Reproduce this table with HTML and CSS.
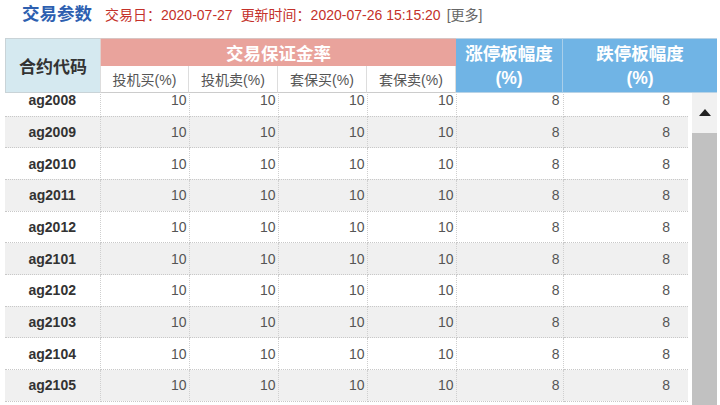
FILE: index.html
```html
<!DOCTYPE html>
<html lang="zh">
<head>
<meta charset="utf-8">
<title>交易参数</title>
<link rel="stylesheet" href="styles.css">
</head>
<body>
<div class="title-bar">
  <span class="title">交易参数</span>
  <span class="info">交易日：2020-07-27</span>
  <span class="info">更新时间：2020-07-26 15:15:20</span>
  <span class="more">[更多]</span>
</div>
<div class="table-wrap">
  <div class="head">
    <div class="h-code">合约代码</div>
    <div class="h-margin">交易保证金率</div>
    <div class="h-sub">投机买(%)</div>
    <div class="h-sub">投机卖(%)</div>
    <div class="h-sub">套保买(%)</div>
    <div class="h-sub">套保卖(%)</div>
    <div class="h-limit h-up">涨停板幅度<br>(%)</div>
    <div class="h-limit h-down">跌停板幅度<br>(%)</div>
  </div>
  <div class="body">
    <div class="viewport">
      <table class="rows">
        <colgroup>
          <col class="c-code"><col class="c-num"><col class="c-num"><col class="c-num"><col class="c-num"><col class="c-up"><col class="c-down">
        </colgroup>
        <tbody>
          <tr><td>ag2008</td><td>10</td><td>10</td><td>10</td><td>10</td><td>8</td><td>8</td></tr>
          <tr><td>ag2009</td><td>10</td><td>10</td><td>10</td><td>10</td><td>8</td><td>8</td></tr>
          <tr><td>ag2010</td><td>10</td><td>10</td><td>10</td><td>10</td><td>8</td><td>8</td></tr>
          <tr><td>ag2011</td><td>10</td><td>10</td><td>10</td><td>10</td><td>8</td><td>8</td></tr>
          <tr><td>ag2012</td><td>10</td><td>10</td><td>10</td><td>10</td><td>8</td><td>8</td></tr>
          <tr><td>ag2101</td><td>10</td><td>10</td><td>10</td><td>10</td><td>8</td><td>8</td></tr>
          <tr><td>ag2102</td><td>10</td><td>10</td><td>10</td><td>10</td><td>8</td><td>8</td></tr>
          <tr><td>ag2103</td><td>10</td><td>10</td><td>10</td><td>10</td><td>8</td><td>8</td></tr>
          <tr><td>ag2104</td><td>10</td><td>10</td><td>10</td><td>10</td><td>8</td><td>8</td></tr>
          <tr><td>ag2105</td><td>10</td><td>10</td><td>10</td><td>10</td><td>8</td><td>8</td></tr>
        </tbody>
      </table>
    </div>
    <div class="scrollbar">
      <div class="track">
        <div class="arrow-box"><span class="arrow"></span></div>
        <div class="thumb"></div>
      </div>
    </div>
  </div>
</div>
</body>
</html>
```
FILE: styles.css
```css
html, body {
  margin: 0;
  padding: 0;
  background: #fff;
}
body {
  width: 720px;
  height: 405px;
  overflow: hidden;
  font-family: "Liberation Sans", "Noto Sans CJK SC", sans-serif;
}
.title-bar {
  display: flex;
  align-items: baseline;
  height: 28px;
  padding: 0 0 10px 22px;
  line-height: 28px;
}
.title {
  font-size: 17.5px;
  font-weight: 700;
  color: #2d5fb0;
  margin-right: 13px;
}
.info {
  font-size: 14px;
  color: #c4312a;
  margin-right: 8px;
}
.more {
  font-size: 14px;
  color: #666;
  margin-left: -2px;
}
.table-wrap {
  margin-left: 5px;
  width: 712px;
}
.head {
  display: grid;
  grid-template-columns: 95px 89px 89px 89px 89px 107px 154px;
  grid-template-rows: 28px 27px;
  box-sizing: border-box;
}
.head > div {
  box-sizing: border-box;
  display: flex;
  align-items: center;
  justify-content: center;
  text-align: center;
}
.h-code {
  grid-row: 1 / 3;
  grid-column: 1;
  background: #d5e9f0;
  border: 1px solid #c9d3d7;
  border-right: none;
  font-size: 17px;
  font-weight: 700;
  color: #333;
}
.h-margin {
  grid-column: 2 / 6;
  grid-row: 1;
  background: #e9a39c;
  border-top: 1px solid #d8c4c2;
  border-left: 1px solid #e0d0ce;
  color: #fff;
  font-size: 17.5px;
  font-weight: 700;
}
.h-sub {
  grid-row: 2;
  background: #fff;
  border-right: 1px solid #ddd;
  border-bottom: 1px solid #ccc;
  font-size: 14px;
  color: #555;
}
.h-sub:nth-child(3) {
  border-left: 1px solid #ddd;
}
.h-limit {
  grid-row: 1 / 3;
  background: #70b4e5;
  color: #fff;
  font-size: 17.5px;
  font-weight: 700;
  line-height: 24px;
  border-top: 1px solid #b9d3e6;
  border-bottom: 1px solid #b9d3e6;
}
.h-up {
  grid-column: 6;
  border-right: 1px solid #a9cfea;
}
.h-down {
  grid-column: 7;
}
.body {
  display: flex;
  height: 312px;
}
.viewport {
  width: 683px;
  height: 312px;
  overflow: hidden;
}
.rows {
  width: 683px;
  margin-top: -8.6px;
  border-collapse: collapse;
  table-layout: fixed;
}
.c-code { width: 95px; }
.c-num { width: 89px; }
.c-up { width: 107px; }
.c-down { width: 125px; }
.rows tr {
  height: 31.7px;
}
.rows tr:nth-child(even) {
  background: #f0f0f0;
}
.rows td {
  padding: 0 2px 0 0;
  border-bottom: 1px dotted #c8c8c8;
  border-right: 1px dotted #cfcfcf;
  font-size: 14px;
  color: #555;
  text-align: right;
  vertical-align: middle;
}
.rows td:first-child {
  text-align: center;
  padding: 0;
  font-weight: 700;
  color: #333;
}
.rows td:nth-child(6) {
  padding-right: 3px;
}
.rows td:last-child {
  padding-right: 18px;
  border-right: none;
}
.scrollbar {
  width: 29px;
  height: 312px;
  padding-left: 4px;
  box-sizing: border-box;
  background: #fff;
}
.track {
  height: 100%;
  background: #f1f1f1;
  display: flex;
  flex-direction: column;
}
.arrow-box {
  height: 40px;
  display: flex;
  align-items: center;
  justify-content: center;
}
.arrow {
  width: 0;
  height: 0;
  border-left: 6px solid transparent;
  border-right: 6px solid transparent;
  border-bottom: 7px solid #222;
  margin-top: -2px;
  margin-left: 1px;
}
.thumb {
  flex: 1;
  background: #c1c1c1;
}
```
